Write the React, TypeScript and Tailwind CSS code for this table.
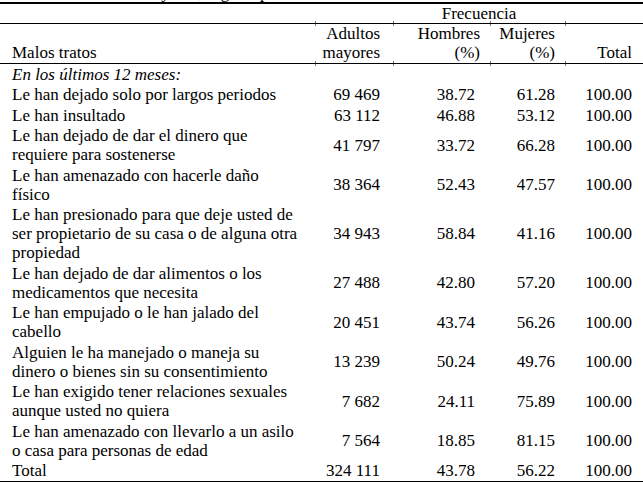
import React from 'react';

type Row = { label: string[]; adultos: string; hombres: string; mujeres: string; total: string };

const rows: Row[] = [
  { label: ['Le han dejado solo por largos periodos'], adultos: '69 469', hombres: '38.72', mujeres: '61.28', total: '100.00' },
  { label: ['Le han insultado'], adultos: '63 112', hombres: '46.88', mujeres: '53.12', total: '100.00' },
  { label: ['Le han dejado de dar el dinero que', 'requiere para sostenerse'], adultos: '41 797', hombres: '33.72', mujeres: '66.28', total: '100.00' },
  { label: ['Le han amenazado con hacerle daño', 'físico'], adultos: '38 364', hombres: '52.43', mujeres: '47.57', total: '100.00' },
  { label: ['Le han presionado para que deje usted de', 'ser propietario de su casa o de alguna otra', 'propiedad'], adultos: '34 943', hombres: '58.84', mujeres: '41.16', total: '100.00' },
  { label: ['Le han dejado de dar alimentos o los', 'medicamentos que necesita'], adultos: '27 488', hombres: '42.80', mujeres: '57.20', total: '100.00' },
  { label: ['Le han empujado o le han jalado del', 'cabello'], adultos: '20 451', hombres: '43.74', mujeres: '56.26', total: '100.00' },
  { label: ['Alguien le ha manejado o maneja su', 'dinero o bienes sin su consentimiento'], adultos: '13 239', hombres: '50.24', mujeres: '49.76', total: '100.00' },
  { label: ['Le han exigido tener relaciones sexuales', 'aunque usted no quiera'], adultos: '7 682', hombres: '24.11', mujeres: '75.89', total: '100.00' },
  { label: ['Le han amenazado con llevarlo a un asilo', 'o casa para personas de edad'], adultos: '7 564', hombres: '18.85', mujeres: '81.15', total: '100.00' },
];

const grid = 'grid grid-cols-[315px_78px_97px_75px_78px]';

// pequeñas marcas de las divisiones de columna junto a las líneas
function Ticks({ at }: { at: 'top' | 'bottom' }) {
  const pos = at === 'top' ? 'top-0' : 'bottom-0';
  return (
    <>
      <span className={`absolute ${pos} left-[315px] w-px h-[2px] bg-[#777]`} />
      <span className={`absolute ${pos} left-[393px] w-px h-[2px] bg-[#777]`} />
      <span className={`absolute ${pos} left-[490px] w-px h-[2px] bg-[#777]`} />
      <span className={`absolute ${pos} left-[565px] w-px h-[2px] bg-[#777]`} />
    </>
  );
}

export default function App() {
  return (
    <div className="w-[643px] h-[482px] overflow-hidden bg-white text-black text-[17px] leading-[19px] font-['Liberation_Serif',serif]">
      {/* título cortado arriba */}
      <div className="h-[2px] overflow-hidden">
        <div className="-mt-[17px] pl-[12px]">Cuadro 4. Adultos mayores, según tipo de malos tratos</div>
      </div>
      <div className="border-t-2 border-black" />

      <div className={`${grid} relative h-[20px] border-b border-black`}>
        <div className="col-start-3 col-span-2 text-center">Frecuencia</div>
        <Ticks at="bottom" />
      </div>

      <div className={`${grid} relative h-[40px] items-end border-b border-black pb-[1px]`}>
        <div className="pl-[12px]">Malos tratos</div>
        <div className="pr-[13px] text-right">Adultos<br />mayores</div>
        <div className="pr-[10px] text-right">Hombres<br />(%)</div>
        <div className="pr-[10px] text-right">Mujeres<br />(%)</div>
        <div className="pr-[11px] text-right">Total</div>
        <Ticks at="top" />
        <Ticks at="bottom" />
      </div>

      <div className="relative pl-[12px] pt-[1px] pb-[0.5px] italic">
        En los últimos 12 meses:
        <Ticks at="top" />
      </div>

      {rows.map((r, i) => (
        <div key={i} className={`${grid} items-center py-[0.75px]`}>
          <div className="pl-[12px]">
            {r.label.map((l, j) => (
              <div key={j}>{l}</div>
            ))}
          </div>
          <div className="pr-[13px] text-right">{r.adultos}</div>
          <div className="pr-[15px] text-right">{r.hombres}</div>
          <div className="pr-[10px] text-right">{r.mujeres}</div>
          <div className="pr-[11px] text-right">{r.total}</div>
        </div>
      ))}

      <div className={`${grid} items-center py-[0.5px] border-b-2 border-black`}>
        <div className="pl-[12px]">Total</div>
        <div className="pr-[13px] text-right">324 111</div>
        <div className="pr-[15px] text-right">43.78</div>
        <div className="pr-[10px] text-right">56.22</div>
        <div className="pr-[11px] text-right">100.00</div>
      </div>
    </div>
  );
}
